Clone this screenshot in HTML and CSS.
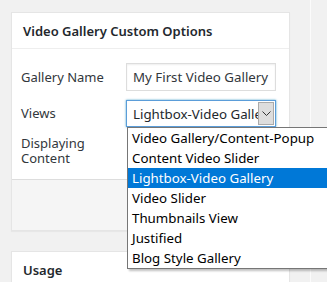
FILE: index.html
```html
<!DOCTYPE html>
<html lang="en">
<head>
    <meta charset="UTF-8">
    <title>Video Gallery Custom Options</title>
    <link rel="stylesheet" href="styles.css">
</head>
<body>
    <div class="page">
        <div class="main-col">
            <div class="postbox">
                <h2 class="postbox-title">Video Gallery Custom Options</h2>
                <div class="postbox-body">
                    <div class="form-row">
                        <label class="form-label" for="galleryName">Gallery Name</label>
                        <input class="text-field" type="text" id="galleryName" value="My First Video Gallery">
                    </div>
                    <div class="form-row">
                        <label class="form-label" for="views">Views</label>
                        <div class="select-wrap">
                            <div class="select-box" id="views">
                                <span class="select-value">Lightbox-Video Gallery</span>
                                <span class="select-arrow">
                                    <svg width="9" height="6" viewBox="0 0 9 6"><path d="M0.5 0.5 L4.5 4.5 L8.5 0.5" fill="none" stroke="#333" stroke-width="1"/></svg>
                                </span>
                            </div>
                            <ul class="select-list">
                                <li>Video Gallery/Content-Popup</li>
                                <li>Content Video Slider</li>
                                <li class="selected">Lightbox-Video Gallery</li>
                                <li>Video Slider</li>
                                <li>Thumbnails View</li>
                                <li>Justified</li>
                                <li>Blog Style Gallery</li>
                            </ul>
                        </div>
                    </div>
                    <div class="form-row">
                        <label class="form-label">Displaying Content</label>
                    </div>
                </div>
                <div class="postbox-footer"></div>
            </div>
            <div class="postbox">
                <h2 class="postbox-title">Usage</h2>
                <div class="postbox-body"></div>
            </div>
        </div>
        <div class="side-col"></div>
    </div>
</body>
</html>
```
FILE: styles.css
```css
body { margin: 0; background: #f1f1f1; font-family: "Noto Sans", "Open Sans", sans-serif; font-size: 13px; color: #23282d; }
.page { display: flex; height: 282px; overflow: hidden; }
.main-col { width: 279px; padding: 12px 0 0 11px; }
.side-col { margin-left: 20px; border-left: 1px solid #fbfbfb; flex: 1; }
.postbox { background: #fff; border: 1px solid #e5e5e5; margin-bottom: 20px; box-shadow: 0 1px 1px rgba(0,0,0,.04); }
.postbox-title { margin: 0; padding: 0 11px; height: 35px; line-height: 37px; font-size: 13px; font-weight: 600; border-bottom: 1px solid #eee; }
.postbox-body { padding: 14px 9px 4px; }
.postbox-footer { height: 50px; background: #f5f5f5; border-top: 1px solid #ddd; }
.form-row { display: flex; align-items: center; margin-bottom: 9px; }
.form-label { width: 105px; flex: none; color: #32373c; line-height: 15px; }
.text-field { width: 150px; height: 28px; box-sizing: border-box; border: 1px solid #ddd; padding: 0 6px; font: inherit; font-size: 13.3px; color: #32373c; box-shadow: inset 0 1px 2px rgba(0,0,0,.07); }
.select-wrap { position: relative; }
.select-box { width: 150px; height: 27px; box-sizing: border-box; border: 1px solid #5b9dd9; display: flex; align-items: center; background: #fff; box-shadow: 0 0 2px rgba(30,140,190,.8); font-size: 13.3px; }
.select-value { flex: 1; overflow: hidden; white-space: nowrap; padding-left: 6px; }
.select-arrow { width: 16px; height: 23px; margin-right: 1px; background: #ddd; border: 1px solid #aaa; box-sizing: border-box; display: flex; align-items: center; justify-content: center; }
.select-list { position: absolute; left: 1px; top: 27px; margin: 0; padding: 0; list-style: none; width: 210px; background: #fff; border: 1px solid #767676; box-shadow: 2px 2px 2px rgba(0,0,0,.25); z-index: 2; font-size: 13.3px; }
.select-list li { height: 20px; line-height: 20px; padding-left: 4px; white-space: nowrap; color: #000; }
.select-list li.selected { background: #0078d7; color: #fff; }
```
